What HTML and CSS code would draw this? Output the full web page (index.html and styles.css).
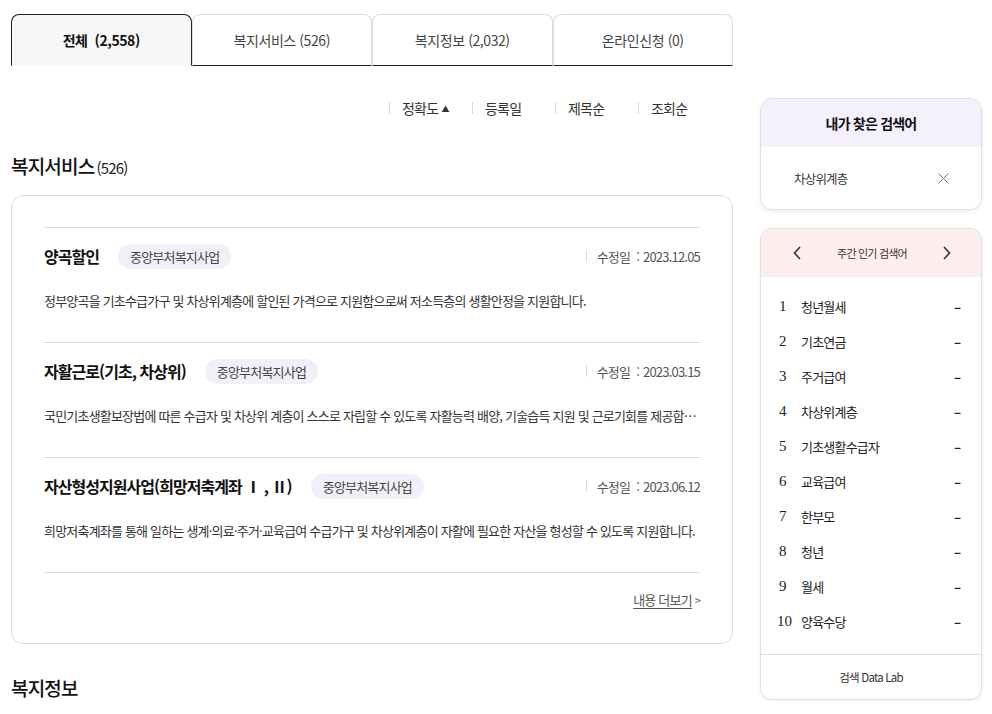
FILE: index.html
```html
<!DOCTYPE html>
<html lang="ko">
<head>
<meta charset="utf-8">
<title>검색 결과</title>
<link rel="stylesheet" href="styles.css">
</head>
<body>
<div class="page">
  <main class="main">
    <nav class="tabs">
      <a class="tab active">전체&nbsp;&nbsp;(2,558)</a>
      <a class="tab">복지서비스 (526)</a>
      <a class="tab">복지정보 (2,032)</a>
      <a class="tab">온라인신청 (0)</a>
    </nav>

    <div class="sort">
      <a class="sort-item"><span class="sep"></span><span>정확도 <span class="tri">▲</span></span></a>
      <a class="sort-item"><span class="sep"></span><span>등록일</span></a>
      <a class="sort-item"><span class="sep"></span><span>제목순</span></a>
      <a class="sort-item"><span class="sep"></span><span>조회순</span></a>
    </div>

    <h2 class="sec-title">복지서비스<span class="count">(526)</span></h2>

    <section class="card">
      <ul class="list">
        <li class="item">
          <div class="item-head">
            <strong class="item-title">양곡할인</strong>
            <span class="badge">중앙부처복지사업</span>
            <span class="date"><span class="sep"></span>수정일 <span class="colon">:</span>2023.12.05</span>
          </div>
          <p class="desc">정부양곡을 기초수급가구 및 차상위계층에 할인된 가격으로 지원함으로써 저소득층의 생활안정을 지원합니다.</p>
        </li>
        <li class="item">
          <div class="item-head">
            <strong class="item-title">자활근로(기초, 차상위)</strong>
            <span class="badge">중앙부처복지사업</span>
            <span class="date"><span class="sep"></span>수정일 <span class="colon">:</span>2023.03.15</span>
          </div>
          <p class="desc">국민기초생활보장법에 따른 수급자 및 차상위 계층이 스스로 자립할 수 있도록 자활능력 배양, 기술습득 지원 및 근로기회를 제공합니다.</p>
        </li>
        <li class="item">
          <div class="item-head">
            <strong class="item-title">자산형성지원사업(희망저축계좌 Ⅰ , Ⅱ)</strong>
            <span class="badge">중앙부처복지사업</span>
            <span class="date"><span class="sep"></span>수정일 <span class="colon">:</span>2023.06.12</span>
          </div>
          <p class="desc">희망저축계좌를 통해 일하는 생계·의료·주거·교육급여 수급가구 및 차상위계층이 자활에 필요한 자산을 형성할 수 있도록 지원합니다.</p>
        </li>
      </ul>
      <div class="more"><a>내용 더보기</a> <span class="gt">&gt;</span></div>
    </section>

    <h2 class="sec-title second">복지정보</h2>
  </main>

  <aside class="side">
    <div class="box">
      <div class="box-head purple">내가 찾은 검색어</div>
      <div class="recent">
        <span>차상위계층</span>
        <svg class="x" width="11" height="11" viewBox="0 0 11 11"><path d="M0.5 0.5L10.5 10.5M10.5 0.5L0.5 10.5" stroke="#777" stroke-width="1" fill="none"/></svg>
      </div>
    </div>

    <div class="box box2">
      <div class="box-head pink">
        <svg width="8" height="14" viewBox="0 0 8 14"><path d="M7 1L1.5 7L7 13" stroke="#333" stroke-width="1.6" fill="none"/></svg>
        <span class="hot-title">주간 인기 검색어</span>
        <svg width="8" height="14" viewBox="0 0 8 14"><path d="M1 1L6.5 7L1 13" stroke="#333" stroke-width="1.6" fill="none"/></svg>
      </div>
      <ol class="rank-list">
        <li><span class="rank">1</span><span class="kw">청년월세</span><span class="trend">–</span></li>
        <li><span class="rank">2</span><span class="kw">기초연금</span><span class="trend">–</span></li>
        <li><span class="rank">3</span><span class="kw">주거급여</span><span class="trend">–</span></li>
        <li><span class="rank">4</span><span class="kw">차상위계층</span><span class="trend">–</span></li>
        <li><span class="rank">5</span><span class="kw">기초생활수급자</span><span class="trend">–</span></li>
        <li><span class="rank">6</span><span class="kw">교육급여</span><span class="trend">–</span></li>
        <li><span class="rank">7</span><span class="kw">한부모</span><span class="trend">–</span></li>
        <li><span class="rank">8</span><span class="kw">청년</span><span class="trend">–</span></li>
        <li><span class="rank">9</span><span class="kw">월세</span><span class="trend">–</span></li>
        <li><span class="rank">10</span><span class="kw">양육수당</span><span class="trend">–</span></li>
      </ol>
      <div class="box-foot">검색 Data Lab</div>
    </div>
  </aside>
</div>
</body>
</html>
```

FILE: styles.css
```css
* { box-sizing: border-box; }
html, body { margin: 0; padding: 0; background: #fff; }
body {
  font-family: "Noto Sans CJK KR", "Noto Sans", sans-serif;
  color: #333;
  letter-spacing: -0.05em;
}
a { color: inherit; text-decoration: none; }
ul, ol { list-style: none; margin: 0; padding: 0; }
p, h2 { margin: 0; }

.page {
  display: flex;
  align-items: flex-start;
  gap: 27px;
  padding: 14px 10px 0 11px;
}
.main { width: 722px; flex: none; }
.side { width: 222px; flex: none; padding-top: 84px; }

/* tabs */
.tabs { display: flex; height: 52px; }
.tab {
  flex: 1;
  display: flex;
  align-items: center;
  justify-content: center;
  border: 1px solid #dedede;
  border-bottom: 1px solid #222;
  border-radius: 8px 8px 0 0;
  font-size: 14px;
  letter-spacing: -0.03em;
  color: #444;
  background: #fff;
}
.tab.active {
  border-color: #222;
  border-bottom-color: transparent;
  background: #f7f7f7;
  font-weight: 700;
  color: #111;
}

/* sort */
.sort {
  display: flex;
  justify-content: flex-end;
  padding-right: 12px;
  margin-top: 32px;
  height: 20px;
}
.sort-item {
  width: 83px;
  display: flex;
  align-items: center;
  gap: 12px;
  font-size: 14px;
  line-height: 20px;
  color: #333;
}
.sep {
  display: inline-block;
  width: 1px;
  height: 12px;
  background: #d9d9d9;
  flex: none;
}
.tri { font-size: 8px; vertical-align: 2px; letter-spacing: 0; }

/* section titles */
.sec-title {
  margin-top: 35px;
  font-size: 19px;
  line-height: 26px;
  font-weight: 500;
  color: #111;
}
.sec-title .count { font-size: 15px; font-weight: 400; margin-left: 2px; color: #222; }
.sec-title.second { margin-top: 31px; }

/* card */
.card {
  margin-top: 14px;
  border: 1px solid #dcdcdc;
  border-radius: 12px;
  padding: 31px 32px 33px;
}
.list { border-bottom: 1px solid #dcdcdc; }
.item {
  border-top: 1px solid #dcdcdc;
  padding: 15px 0 31px;
}
.item-head {
  display: flex;
  align-items: center;
  height: 26px;
}
.item-title {
  font-size: 16px;
  font-weight: 700;
  color: #111;
  letter-spacing: -0.06em;
}
.badge {
  margin-left: 19px;
  height: 25px;
  line-height: 25px;
  padding: 0 12px;
  background: #f1f0f8;
  border-radius: 13px;
  font-size: 13px;
  color: #444;
}
.date {
  margin-left: auto;
  display: flex;
  align-items: center;
  font-size: 13px;
  color: #555;
}
.date .sep { margin-right: 10px; }
.colon { margin: 0 4px 0 6px; }
.desc {
  margin-top: 22px;
  font-size: 13px;
  line-height: 20px;
  color: #333;
  white-space: nowrap;
  overflow: hidden;
  text-overflow: ellipsis;
}
.more {
  padding-top: 17px;
  text-align: right;
  font-size: 13px;
  line-height: 20px;
  color: #555;
}
.more a { text-decoration: underline; text-underline-offset: 3px; }
.gt { font-size: 11px; }

/* sidebar */
.box {
  border: 1px solid #e0e0e0;
  border-radius: 12px;
  overflow: hidden;
  background: #fff;
  box-shadow: 0 2px 4px rgba(0,0,0,0.06);
}
.box2 { margin-top: 18px; }
.box-head {
  height: 48px;
  display: flex;
  align-items: center;
  justify-content: center;
  font-size: 14px;
  font-weight: 700;
  color: #111;
}
.box-head.purple { background: #f4f1fc; }
.box-head.pink {
  background: #fdeeed;
  justify-content: space-between;
  padding: 0 30px 0 32px;
  font-weight: 400;
}
.hot-title { font-size: 11px; color: #333; }
.recent {
  height: 62px;
  display: flex;
  align-items: center;
  justify-content: space-between;
  padding: 0 32px 0 33px;
  font-size: 12.5px;
  color: #333;
}
.rank-list { padding: 12px 20px 15px 16px; }
.rank-list li {
  height: 35px;
  display: flex;
  align-items: center;
  font-size: 13px;
  color: #222;
}
.rank {
  width: 24px;
  padding-left: 2px;
  font-family: "Liberation Serif", serif;
  font-size: 15px;
  letter-spacing: 0;
}
.rank-list li:last-child .rank { padding-left: 0; }
.kw { flex: 1; }
.trend { font-weight: 700; font-size: 13px; color: #222; letter-spacing: 0; }
.box-foot {
  border-top: 1px solid #dcdcdc;
  height: 45px;
  display: flex;
  align-items: center;
  justify-content: center;
  font-size: 11.5px;
  color: #333;
}
```
